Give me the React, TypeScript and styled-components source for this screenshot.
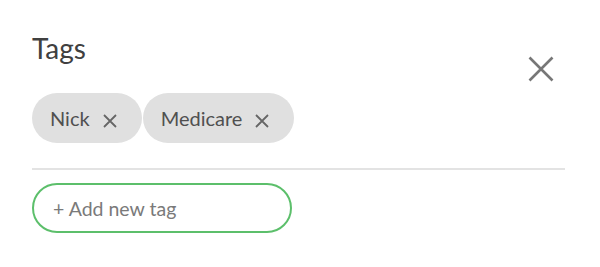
import React from "react";
import styled, { createGlobalStyle } from "styled-components";

const Global = createGlobalStyle`
  html, body { margin: 0; padding: 0; background: #ffffff; }
  body { font-family: Lato, "Open Sans", sans-serif; }
  * { box-sizing: border-box; }
`;

const Panel = styled.div`
  width: 600px;
  height: 267px;
  padding: 30px 35px 0 32px;
  display: flex;
  flex-direction: column;
`;

const Header = styled.div`
  display: flex;
  justify-content: space-between;
  align-items: flex-start;
  height: 36px;
`;

const Title = styled.h2`
  margin: 0;
  font-family: Lato, sans-serif;
  font-weight: 400;
  font-size: 28px;
  line-height: 36px;
  color: #404040;
`;

const CloseButton = styled.button`
  width: 40px;
  height: 40px;
  margin-top: 18.5px;
  margin-right: 4.5px;
  border: none;
  background: transparent;
  padding: 0;
  display: flex;
  align-items: center;
  justify-content: center;
  color: #777777;
  cursor: pointer;
`;

const ChipRow = styled.div`
  display: flex;
  gap: 1px;
  margin-top: 27px;
`;

const Chip = styled.div`
  height: 50px;
  border-radius: 25px;
  background: #e0e0e0;
  display: flex;
  align-items: center;
  padding: 0 25px 0 18px;
  gap: 13px;
`;

const ChipLabel = styled.span`
  font-size: 20px;
  line-height: 24px;
  color: #505050;
`;

const ChipRemove = styled.span`
  display: flex;
  color: #666666;
  padding-top: 5px;
`;

const Divider = styled.hr`
  margin: 25px 0 0 0;
  border: none;
  height: 2px;
  background: #e3e3e3;
`;

const TagInput = styled.input`
  margin-top: 13px;
  width: 260px;
  height: 50px;
  border: 2px solid #5cbf6b;
  border-radius: 25px;
  padding: 0 0 0 19px;
  font-family: Lato, sans-serif;
  font-size: 19.5px;
  color: #444;
  outline: none;
  background: #fff;
  &::placeholder {
    color: #7a7a7a;
  }
`;

const SmallX = () => (
  <svg width="14" height="14" viewBox="0 0 14 14">
    <path d="M1 1 L13 13 M13 1 L1 13" stroke="currentColor" strokeWidth="1.8" fill="none" />
  </svg>
);

const BigX = () => (
  <svg width="26" height="26" viewBox="0 0 26 26">
    <path d="M1.5 1.5 L24.5 24.5 M24.5 1.5 L1.5 24.5" stroke="currentColor" strokeWidth="2.6" fill="none" />
  </svg>
);

const tags = ["Nick", "Medicare"];

export default function App() {
  return (
    <>
      <Global />
      <Panel>
        <Header>
          <Title>Tags</Title>
          <CloseButton aria-label="Close">
            <BigX />
          </CloseButton>
        </Header>
        <ChipRow>
          {tags.map((t) => (
            <Chip key={t}>
              <ChipLabel>{t}</ChipLabel>
              <ChipRemove>
                <SmallX />
              </ChipRemove>
            </Chip>
          ))}
        </ChipRow>
        <Divider />
        <TagInput placeholder="+ Add new tag" />
      </Panel>
    </>
  );
}
